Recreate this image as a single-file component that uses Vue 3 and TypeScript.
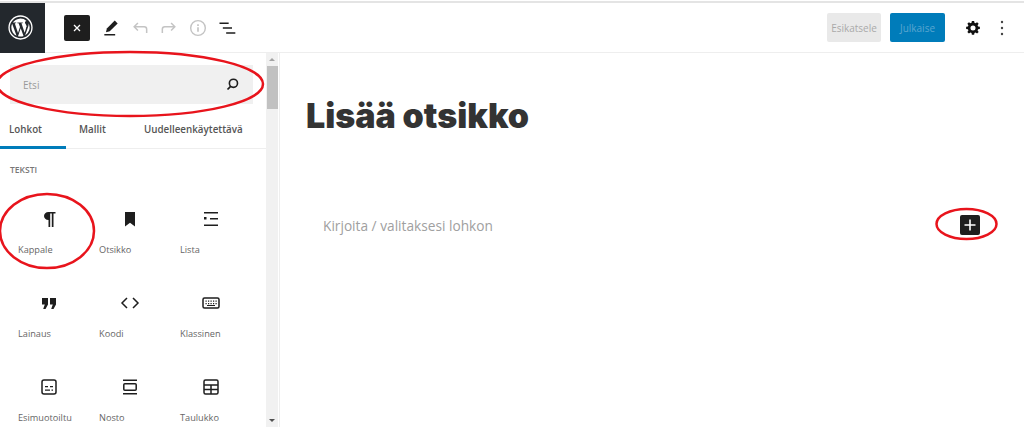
<template>
  <div class="page">
    <div class="strip"></div>
    <header class="topbar">
      <div class="logo">
        <svg viewBox="0 0 24 24" width="25" height="25">
          <circle cx="12" cy="12" r="11" fill="none" stroke="#fff" stroke-width="1.300" />
          <path fill="#fff" d="M3.200 12c0 3.500 2 6.500 5 8L4 8.400A8.800 8.800 0 0 0 3.200 12zm14.700-.400c0-1.100-.4-1.900-.7-2.400-.5-.7-.9-1.300-.9-2 0-.8.600-1.500 1.400-1.500h.1A8.800 8.800 0 0 0 4.600 7.300h.6c.9 0 2.300-.1 2.300-.1.500 0 .5.700 0 .7 0 0-.5.100-1 .1l3.100 9.200 1.900-5.600-1.300-3.600c-.5 0-.9-.1-.9-.1-.5 0-.4-.7 0-.7 0 0 1.400.1 2.300.1.900 0 2.300-.1 2.300-.1.500 0 .5.700 0 .7 0 0-.5.100-1 .1l3.100 9.100.8-2.800c.4-1.100.6-1.900.6-2.600zM12.200 12.800l-2.600 7.500a8.800 8.800 0 0 0 5.400-.1l-.1-.1-2.700-7.300zm7.500-4.900c0 .3.100.6.100.9 0 .9-.2 1.900-.7 3.200l-2.700 7.700A8.800 8.800 0 0 0 19.700 7.900z" />
        </svg>
      </div>
      <div class="tools">
        <button class="close-btn">
          <svg viewBox="0 0 24 24" width="12" height="12"><path d="M6 6l12 12M18 6L6 18" stroke="#fff" stroke-width="2.600" fill="none" /></svg>
        </button>
        <svg class="tool pen" viewBox="0 0 24 24" width="20" height="20"><path d="M4 21h13v-1.800H4z" fill="#1e1e1e" /><path d="M6 17l1-4.500L16.500 3l3.500 3.500L10.500 16z" fill="#1e1e1e" /></svg>
        <svg class="tool" viewBox="0 0 24 24" width="20" height="20"><path d="M20 18v-4.500c0-1.700-1.300-3-3-3H5M9.500 6L5 10.500 9.500 15" fill="none" stroke="#c4c4c4" stroke-width="1.800" /></svg>
        <svg class="tool" viewBox="0 0 24 24" width="20" height="20"><path d="M4 18v-4.500c0-1.700 1.300-3 3-3h12M14.500 6L19 10.500 14.500 15" fill="none" stroke="#c4c4c4" stroke-width="1.800" /></svg>
        <svg class="tool" viewBox="0 0 24 24" width="20" height="20"><circle cx="12" cy="12" r="8.800" fill="none" stroke="#c4c4c4" stroke-width="1.700" /><path d="M11 11h2v5.500h-2zM11 7.500h2v2h-2z" fill="#c4c4c4" /></svg>
        <svg class="tool" viewBox="0 0 24 24" width="20" height="20"><path d="M3 5.500h11v1.800H3zM7 11.200h11V13H7zM11 17h11v1.800H11z" fill="#1e1e1e" /></svg>
      </div>
      <div class="actions">
        <button class="preview">Esikatsele</button>
        <button class="publish">Julkaise</button>
        <svg class="gear" viewBox="0 0 24 24" width="16" height="16"><path fill="#111" fill-rule="evenodd" d="M10.300 1.500h3.400l.5 2.700 1.600.7 2.300-1.600 2.400 2.400-1.600 2.300.7 1.600 2.700.5v3.400l-2.700.5-.7 1.600 1.600 2.300-2.400 2.400-2.300-1.600-1.600.7-.5 2.700h-3.400l-.5-2.700-1.600-.7-2.300 1.600-2.400-2.400 1.600-2.300-.7-1.600-2.700-.5v-3.400l2.700-.5.700-1.600-1.600-2.300 2.400-2.400 2.300 1.600 1.600-.7zM12 8.200a3.800 3.800 0 1 0 0 7.600 3.800 3.800 0 0 0 0-7.600z" /></svg>
        <svg class="dots" viewBox="0 0 4 18" width="4" height="18"><circle cx="2" cy="3" r="1.200" fill="#444" /><circle cx="2" cy="9" r="1.200" fill="#444" /><circle cx="2" cy="15" r="1.200" fill="#444" /></svg>
      </div>
    </header>

    <div class="body">
      <aside class="inserter">
        <div class="panel">
          <div class="search">
            <span>Etsi</span>
            <svg viewBox="0 0 24 24" width="15" height="15"><circle cx="13.500" cy="10" r="6.500" fill="none" stroke="#1e1e1e" stroke-width="2.600" /><path d="M9 15l-5 5" stroke="#1e1e1e" stroke-width="2.800" /></svg>
          </div>
          <nav class="tabs">
            <div class="tab active">Lohkot</div>
            <div class="tab">Mallit</div>
            <div class="tab">Uudelleenkäytettävä</div>
          </nav>
          <div class="section">TEKSTI</div>
          <div class="grid">
            <div v-for="b in blocks" :key="b.label" class="block">
              <svg viewBox="0 0 24 24" width="24" height="24" v-html="b.icon"></svg>
              <span>{{ b.label }}</span>
            </div>
          </div>
        </div>
        <div class="scrollbar">
          <i class="arrow up"></i>
          <div class="thumb"></div>
          <i class="arrow down"></i>
        </div>
      </aside>

      <main class="editor">
        <h1>Lisää otsikko</h1>
        <div class="para">
          <span>Kirjoita / valitaksesi lohkon</span>
          <button class="add">
            <svg viewBox="0 0 16 16" width="16" height="16"><path d="M8 2.500v11M2.500 8h11" stroke="#fff" stroke-width="1.600" /></svg>
          </button>
        </div>
      </main>
    </div>

    <!-- red hand-drawn annotations on top of the screenshot -->
    <svg class="marks" viewBox="0 0 1024 427" width="1024" height="427">
      <g fill="none" stroke="#e8141c" stroke-width="2.500">
        <ellipse cx="130" cy="84" rx="133" ry="32" />
        <ellipse cx="47" cy="231" rx="47" ry="37" />
        <ellipse cx="966.500" cy="224" rx="30" ry="15" />
      </g>
    </svg>
  </div>
</template>

<script setup lang="ts">
interface Block {
  label: string;
  icon: string;
}

const fill = 'fill="#1e1e1e"';

const blocks: Block[] = [
  { label: "Kappale", icon: `<path ${fill} d="M9.500 5h9v1.600h-2V20h-1.700V6.600h-1.600V20h-1.700v-7c-2.700 0-4.500-1.700-4.500-4s1.800-4 4.500-4z"/>` },
  { label: "Otsikko", icon: `<path ${fill} d="M7 5h10v14.500l-5-3.800-5 3.800z"/>` },
  { label: "Lista", icon: `<path ${fill} d="M5 5h14v1.500H5zM5 17.500h14V19H5zM11 11h8v1.500h-8zM5 10h2.500v2.500H5z"/>` },
  { label: "Lainaus", icon: `<path ${fill} d="M5 7h6v6.500L8.500 18H6.200l1.600-4.500H5zM13 7h6v6.500L16.500 18h-2.300l1.600-4.500H13z"/>` },
  { label: "Koodi", icon: `<path d="M9 7l-5 5 5 5M15 7l5 5-5 5" fill="none" stroke="#1e1e1e" stroke-width="1.500"/>` },
  { label: "Klassinen", icon: `<rect x="4" y="7" width="16" height="10" rx="1.500" fill="none" stroke="#1e1e1e" stroke-width="1.500"/><path ${fill} d="M6.500 9.500h1.200v1.200H6.500zM9 9.500h1.200v1.200H9zM11.500 9.500h1.200v1.200h-1.200zM14 9.500h1.200v1.200H14zM16.500 9.500h1.200v1.200h-1.200zM6.500 12h1.200v1.200H6.500zM9 12h1.200v1.200H9zM11.500 12h1.200v1.200h-1.200zM14 12h1.200v1.200H14zM16.500 12h1.200v1.200h-1.200zM8 14h8v1H8z"/>` },
  { label: "Esimuotoiltu", icon: `<rect x="5" y="5" width="14" height="14" rx="2" fill="none" stroke="#1e1e1e" stroke-width="1.500"/><path ${fill} d="M8 11h3v1.300H8zM13 11h3v1.300h-3zM8 14.500h5v1.300H8zM14.500 14.500H16v1.300h-1.500z"/>` },
  { label: "Nosto", icon: `<path ${fill} d="M5 4.500h14V6H5zM5 18h14v1.500H5z"/><rect x="5.800" y="8.800" width="12.400" height="6.400" rx="1" fill="none" stroke="#1e1e1e" stroke-width="1.500"/>` },
  { label: "Taulukko", icon: `<rect x="5" y="5" width="14" height="14" rx="1.500" fill="none" stroke="#1e1e1e" stroke-width="1.500"/><path d="M5 10h14M5 14.500h14M12 10v9" stroke="#1e1e1e" stroke-width="1.500"/>` },
];
</script>

<style>
html,
body {
  margin: 0;
  background: #fff;
  overflow: hidden;
}
</style>

<style scoped>
.page {
  position: relative;
  width: 1024px;
  height: 427px;
  overflow: hidden;
  background: #fff;
  font-family: "Open Sans", "Noto Sans", sans-serif;
  color: #555;
}

button {
  border: none;
  padding: 0;
  font-family: inherit;
}

.strip {
  height: 2px;
  margin-top: 1px;
  background: #e4e4e4;
}

.topbar {
  display: flex;
  align-items: center;
  height: 50px;
  box-sizing: border-box;
  border-bottom: 1px solid #eeeeee;
}

.logo {
  width: 45px;
  height: 50px;
  padding-right: 4px;
  box-sizing: border-box;
  background: #23282d;
  display: flex;
  align-items: center;
  justify-content: center;
  flex: none;
}

.tools {
  display: flex;
  align-items: center;
  margin-left: 19px;
}

.close-btn {
  width: 26px;
  height: 26px;
  background: #1e1e1e;
  border-radius: 2px;
  display: flex;
  align-items: center;
  justify-content: center;
}

.tool {
  margin-left: 9px;
  flex: none;
}

.pen {
  margin-left: 11px;
}

.actions {
  margin-left: auto;
  display: flex;
  align-items: center;
  padding-right: 20px;
}

.preview {
  width: 54px;
  height: 29px;
  border-radius: 2px;
  background: #e9e9e9;
  color: #a9a9a9;
  font-size: 10px;
}

.publish {
  width: 55px;
  height: 29px;
  margin-left: 9px;
  border-radius: 2px;
  background: #007cba;
  color: #5aa6d0;
  font-size: 10px;
}

.gear {
  margin-left: 20px;
}

.dots {
  margin-left: 19px;
}

.body {
  display: flex;
  height: 374px;
}

.inserter {
  width: 280px;
  flex: none;
  display: flex;
  border-right: 1px solid #eeeeee;
  box-sizing: border-box;
}

.panel {
  width: 266px;
  flex: none;
}

.search {
  margin: 12px 13px 0 10px;
  height: 39px;
  background: #f0f0f0;
  display: flex;
  align-items: center;
  justify-content: space-between;
  padding: 0 13px 0 13px;
  font-size: 10px;
  color: #9a9a9a;
}

.tabs {
  display: flex;
  height: 45px;
  border-bottom: 1px solid #eeeeee;
  box-sizing: border-box;
}

.tab {
  font-size: 9.800px;
  font-weight: 600;
  color: #555;
  line-height: 52px;
  padding: 0;
}

.tab:nth-child(2) {
  width: 78px;
  padding-left: 13px;
  box-sizing: border-box;
}

.tab.active {
  width: 66px;
  padding-left: 9px;
  box-sizing: border-box;
  height: 45px;
  border-bottom: 3px solid #007cba;
}

.section {
  margin: 15px 0 0 10px;
  font-size: 8.500px;
  font-weight: 600;
  color: #777;
  line-height: 12px;
}

.grid {
  display: grid;
  grid-template-columns: repeat(3, 81px);
  grid-auto-rows: 84px;
  margin: 31px 0 0 9px;
}

.block {
  display: flex;
  flex-direction: column;
  align-items: flex-start;
  font-size: 9.200px;
  color: #666;
}

.block svg {
  margin-left: 28px;
}

.block span {
  margin: 12px 0 0 9px;
  line-height: 14px;
}

.scrollbar {
  width: 12px;
  background: #f1f1f1;
  position: relative;
  flex: none;
}

.thumb {
  position: absolute;
  top: 13px;
  left: 1px;
  width: 11px;
  height: 43px;
  background: #c1c1c1;
}

.arrow {
  position: absolute;
  left: 3px;
  width: 0;
  height: 0;
  border-left: 3px solid transparent;
  border-right: 3px solid transparent;
}

.arrow.up {
  top: 5px;
  border-bottom: 3px solid #a3a3a3;
}

.arrow.down {
  bottom: 5px;
  border-top: 3px solid #505050;
}

.editor {
  flex: 1;
  padding: 0 27px 0 26px;
}

h1 {
  margin: 40px 0 0;
  font-family: Inter, "Noto Sans", sans-serif;
  font-size: 34px;
  line-height: 46px;
  font-weight: 900;
  color: #333;
}

.para {
  display: flex;
  align-items: center;
  justify-content: space-between;
  margin: 74px 17px 0 17px;
  height: 24px;
  font-size: 13.700px;
  color: #a0a0a0;
}

.add {
  width: 20px;
  height: 20px;
  background: #1e1e1e;
  border-radius: 2px;
  display: flex;
  align-items: center;
  justify-content: center;
}

.marks {
  position: absolute;
  left: 0;
  top: 0;
  pointer-events: none;
}
</style>
